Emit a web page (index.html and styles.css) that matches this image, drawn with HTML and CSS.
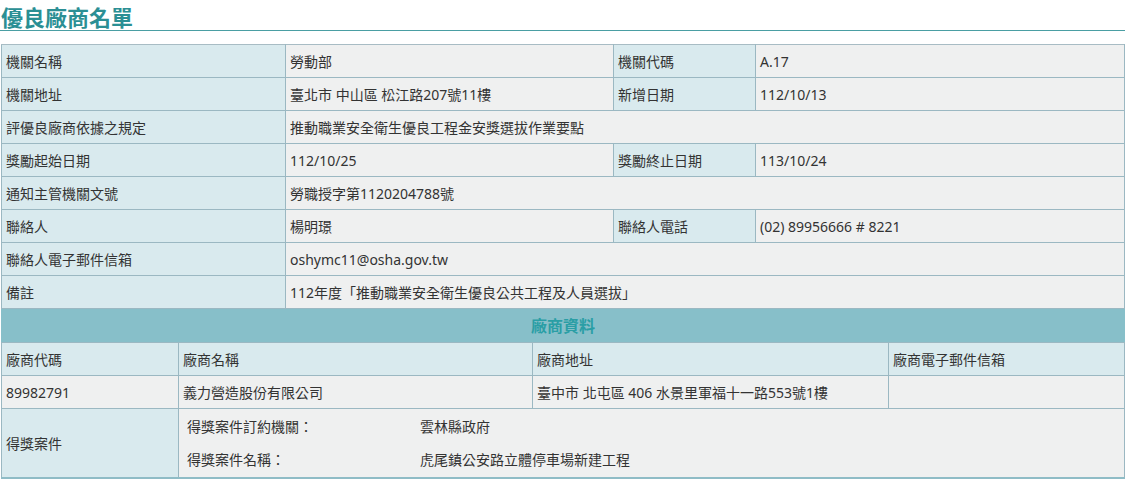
FILE: index.html
```html
<!DOCTYPE html>
<html lang="zh-Hant">
    <head>
        <meta charset="UTF-8">
        <title>優良廠商名單</title>
        <link rel="stylesheet" href="styles.css">
    </head>
    <body>
        <main>
            <h1 class="page-title">優良廠商名單</h1>

            <table class="info-table">
                <colgroup>
                    <col class="c1"><col class="c2"><col class="c3"><col class="c4">
                </colgroup>
                <tr>
                    <th>機關名稱</th><td>勞動部</td>
                    <th>機關代碼</th><td>A.17</td>
                </tr>
                <tr>
                    <th>機關地址</th><td>臺北市 中山區 松江路207號11樓</td>
                    <th>新增日期</th><td>112/10/13</td>
                </tr>
                <tr>
                    <th>評優良廠商依據之規定</th><td colspan="3">推動職業安全衛生優良工程金安獎選拔作業要點</td>
                </tr>
                <tr>
                    <th>獎勵起始日期</th><td>112/10/25</td>
                    <th>獎勵終止日期</th><td>113/10/24</td>
                </tr>
                <tr>
                    <th>通知主管機關文號</th><td colspan="3">勞職授字第1120204788號</td>
                </tr>
                <tr>
                    <th>聯絡人</th><td>楊明璟</td>
                    <th>聯絡人電話</th><td>(02) 89956666 # 8221</td>
                </tr>
                <tr>
                    <th>聯絡人電子郵件信箱</th><td colspan="3">oshymc11@osha.gov.tw</td>
                </tr>
                <tr>
                    <th>備註</th><td colspan="3">112年度「推動職業安全衛生優良公共工程及人員選拔」</td>
                </tr>
            </table>

            <div class="section-head">廠商資料</div>

            <table class="vendor-table">
                <colgroup>
                    <col class="v1"><col class="v2"><col class="v3"><col class="v4">
                </colgroup>
                <tr class="head-row">
                    <th>廠商代碼</th><th>廠商名稱</th><th>廠商地址</th><th>廠商電子郵件信箱</th>
                </tr>
                <tr>
                    <td>89982791</td><td>義力營造股份有限公司</td><td>臺中市 北屯區 406 水景里軍福十一路553號1樓</td><td></td>
                </tr>
                <tr class="award-row">
                    <th>得獎案件</th>
                    <td colspan="3">
                        <div class="award-list">
                            <span>得獎案件訂約機關：</span><span>雲林縣政府</span>
                            <span>得獎案件名稱：</span><span>虎尾鎮公安路立體停車場新建工程</span>
                        </div>
                    </td>
                </tr>
            </table>
        </main>
    </body>
</html>
```

FILE: styles.css
```css
body {
    margin: 0;
    font-family: "Noto Sans", "Noto Sans CJK TC", sans-serif;
    font-size: 14px;
    color: #333;
    background: #fff;
}

main {
    width: 1125px;
}

.page-title {
    margin: 0;
    padding: 3px 0 0 1px;
    height: 27px;
    font-family: "Noto Sans CJK TC", sans-serif;
    font-size: 22px;
    line-height: 27px;
    font-weight: bold;
    color: #2b8f94;
    border-bottom: 1px solid #4a9ea3;
    margin-bottom: 13px;
}

table {
    width: 1124px;
    margin-left: 1px;
    border-collapse: collapse;
    table-layout: fixed;
}

th, td {
    border: 1px solid #9bb8c2;
    padding: 0 4px;
    height: 32px;
    text-align: left;
    font-weight: normal;
    white-space: nowrap;
    background: #eff0f0;
}

th {
    background: #d9eaee;
}

.info-table .c1 { width: 284px; }
.info-table .c2 { width: 328px; }
.info-table .c3 { width: 142px; }
.info-table .c4 { width: auto; }

.info-table tr:first-child th,
.info-table tr:first-child td {
    border-top-color: #a8bcc4;
}

.section-head {
    width: 1124px;
    margin-left: 1px;
    box-sizing: border-box;
    height: 34px;
    line-height: 32px;
    text-align: center;
    font-family: "Noto Sans CJK TC", sans-serif;
    font-size: 16px;
    font-weight: bold;
    color: #2a9ea5;
    background: #87bfc9;
    border-bottom: 1px solid #9bb8c2;
}

.vendor-table .v1 { width: 177px; }
.vendor-table .v2 { width: 354px; }
.vendor-table .v3 { width: 356px; }
.vendor-table .v4 { width: auto; }

.vendor-table tr:first-child th {
    border-top: none;
}

.award-row th,
.award-row td {
    height: 68px;
    border-bottom: 2px solid #8fbcc6;
}

.award-row td {
    padding: 0 8px;
}

.award-list {
    display: grid;
    grid-template-columns: 233px auto;
    row-gap: 12px;
    line-height: 21px;
}
```
